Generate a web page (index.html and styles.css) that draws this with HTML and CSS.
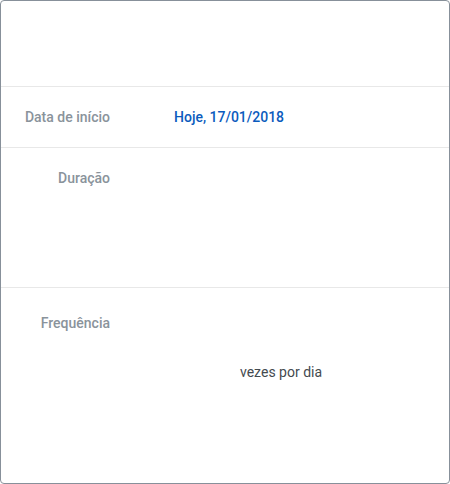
FILE: index.html
```html
<!DOCTYPE html>
<html lang="pt">
<head>
<meta charset="utf-8">
<link rel="stylesheet" href="styles.css">
</head>
<body>
<div class="card">
  <div class="header"></div>
  <div class="row row-date">
    <div class="label">Data de início</div>
    <div class="value date">Hoje, 17/01/2018</div>
  </div>
  <div class="row row-duration">
    <div class="label">Duração</div>
    <div class="value"></div>
  </div>
  <div class="row row-freq">
    <div class="label">Frequência</div>
    <div class="value freq">
      <div class="freq-line"><span class="freq-input"></span><span class="freq-text">vezes por dia</span></div>
    </div>
  </div>
</div>
</body>
</html>
```
FILE: styles.css
```css
html, body {
  margin: 0;
  padding: 0;
  background: #ffffff;
}
body {
  font-family: Roboto, "Liberation Sans", sans-serif;
}
.card {
  width: 450px;
  height: 484px;
  box-sizing: border-box;
  border: 1px solid #87909a;
  border-radius: 4px;
  display: flex;
  flex-direction: column;
  overflow: hidden;
}
.header {
  height: 85px;
  border-bottom: 1px solid #e8e8e8;
  flex: none;
}
.row {
  display: flex;
  gap: 64px;
  flex: none;
}
.label {
  width: 109px;
  text-align: right;
  font-size: 14px;
  font-weight: 500;
  line-height: 16px;
  color: #8a939b;
}
.value {
  flex: 1;
  font-size: 14px;
  line-height: 16px;
}
.row-date {
  height: 60px;
  align-items: center;
  border-bottom: 1px solid #e8e8e8;
}
.date {
  color: #0b5bbd;
  font-weight: 500;
}
.row-duration {
  height: 117px;
  padding-top: 22px;
  border-bottom: 1px solid #e8e8e8;
}
.row-freq {
  flex: 1;
  padding-top: 27px;
}
.freq-line {
  display: flex;
  margin-top: 49px;
}
.freq-input {
  width: 66px;
}
.freq-text {
  color: #444a4f;
  font-size: 14px;
  line-height: 16px;
}
```
